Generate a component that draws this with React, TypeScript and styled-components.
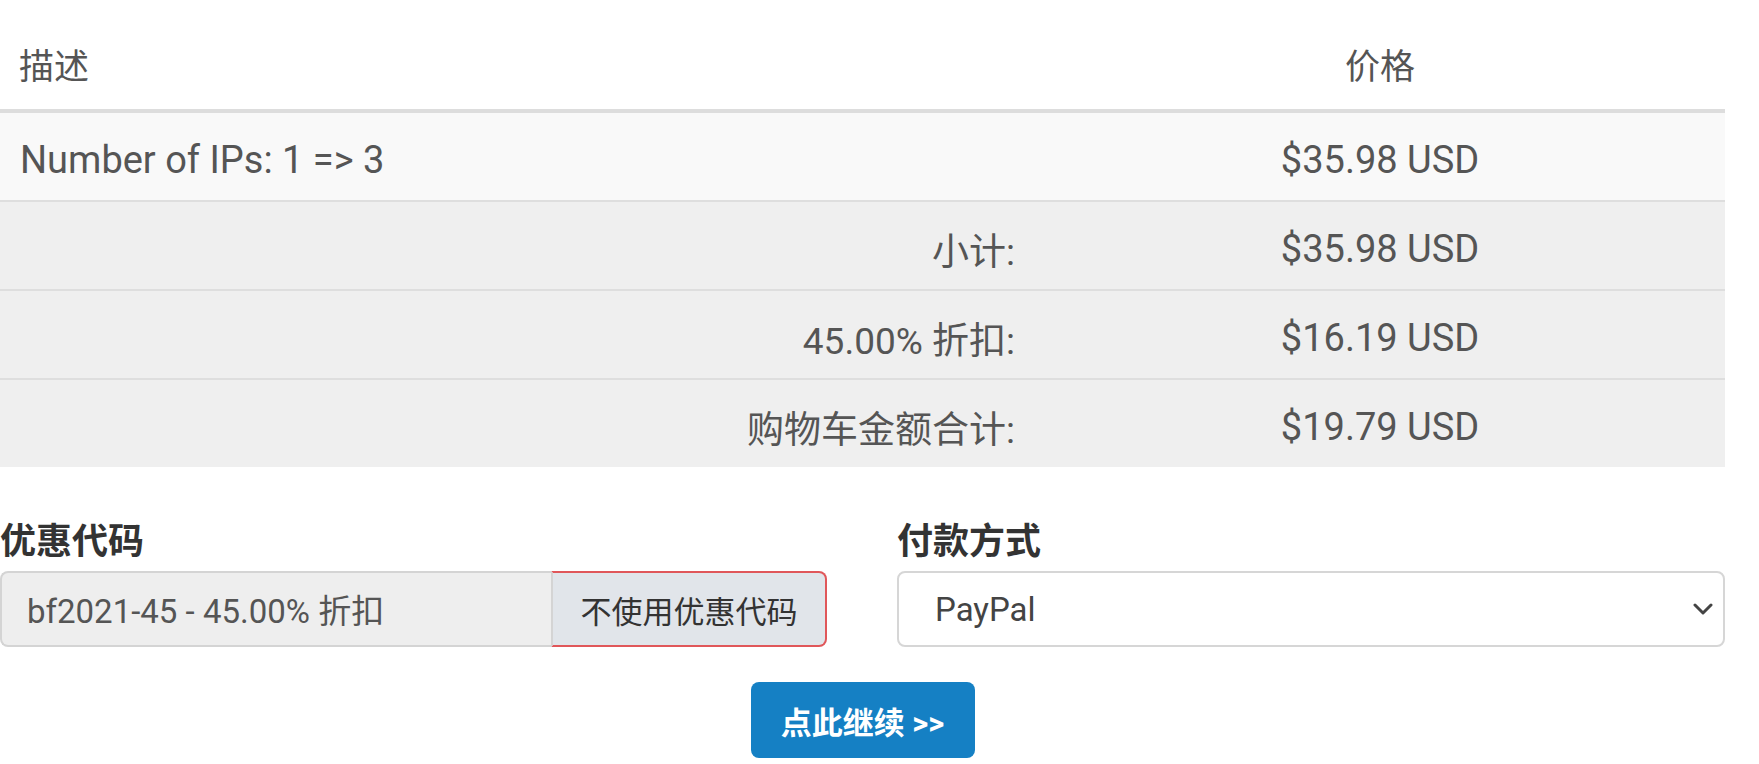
import React from "react";
import styled, { createGlobalStyle } from "styled-components";

const Global = createGlobalStyle`
  html, body { margin: 0; padding: 0; background: #fff; }
  body { font-family: Roboto, "Noto Sans CJK SC", sans-serif; color: #555; }
`;

const Page = styled.div`
  width: 1725px;
  padding-top: 22px;
`;

const Table = styled.table`
  width: 100%;
  border-collapse: collapse;
  font-size: 38px;
`;

const Th = styled.th<{ $align?: string }>`
  height: 83px;
  padding: 0 19px 4px;
  text-align: ${(p) => p.$align || "left"};
  font-size: 35px;
  font-weight: 400;
  color: #555;
  border-bottom: 4px solid #dddddd;
  vertical-align: middle;
`;

const Tr = styled.tr<{ $bg: string }>`
  background: ${(p) => p.$bg};
`;

const Td = styled.td<{ $align?: string; $first?: boolean; $w?: string; $size?: number }>`
  height: 81px;
  padding: 6px 20px 0;
  text-align: ${(p) => p.$align || "left"};
  vertical-align: middle;
  font-size: ${(p) => (p.$size ? `${p.$size}px` : "inherit")};
  border-top: ${(p) => (p.$first ? "none" : "2px solid #dedede")};
  width: ${(p) => p.$w || "auto"};
`;

const Form = styled.div`
  display: grid;
  grid-template-columns: 827px 828px;
  column-gap: 70px;
  margin-top: 54px;
`;

const Label = styled.div`
  font-size: 36px;
  line-height: 42px;
  font-weight: 600;
  color: #333;
  margin-bottom: 8px;
`;

const Group = styled.div`
  display: flex;
  height: 76px;
`;

const CouponInput = styled.div`
  flex: 1;
  box-sizing: border-box;
  background: #eeeeee;
  border: 2px solid #d4d4d4;
  border-right: none;
  border-radius: 8px 0 0 8px;
  padding: 0 25px;
  display: flex;
  align-items: center;
  font-size: 33px;
  color: #555;
`;

const RemoveButton = styled.button`
  width: 276px;
  box-sizing: border-box;
  background: #e1e5ea;
  border: 2px solid #e0575a;
  border-left: 2px solid #d4d4d4;
  border-radius: 0 8px 8px 0;
  font-family: inherit;
  font-size: 31px;
  color: #333;
  padding: 0;
  cursor: pointer;
`;

const Select = styled.div`
  height: 76px;
  box-sizing: border-box;
  border: 2px solid #d6d6d6;
  border-radius: 8px;
  background: #fff;
  display: flex;
  align-items: center;
  justify-content: space-between;
  padding: 0 10px 0 36px;
  font-size: 33px;
  color: #444;
`;

const Chevron = styled.svg`
  width: 20px;
  height: 12px;
`;

const Actions = styled.div`
  display: flex;
  justify-content: center;
  margin-top: 35px;
`;

const ContinueButton = styled.button`
  width: 224px;
  height: 76px;
  border: none;
  border-radius: 8px;
  background: #1580c4;
  color: #fff;
  font-family: inherit;
  font-size: 31px;
  font-weight: 700;
  cursor: pointer;
`;

export default function App() {
  return (
    <Page>
      <Global />
      <Table>
        <thead>
          <tr>
            <Th>描述</Th>
            <Th $align="center">价格</Th>
          </tr>
        </thead>
        <tbody>
          <Tr $bg="#f9f9f9">
            <Td $first $w="60%">Number of IPs: 1 =&gt; 3</Td>
            <Td $first $align="center">$35.98 USD</Td>
          </Tr>
          <Tr $bg="#efefef">
            <Td $align="right" $size={37}>小计:</Td>
            <Td $align="center">$35.98 USD</Td>
          </Tr>
          <Tr $bg="#efefef">
            <Td $align="right" $size={37}>45.00% 折扣:</Td>
            <Td $align="center">$16.19 USD</Td>
          </Tr>
          <Tr $bg="#efefef">
            <Td $align="right" $size={37}>购物车金额合计:</Td>
            <Td $align="center">$19.79 USD</Td>
          </Tr>
        </tbody>
      </Table>
      <Form>
        <div>
          <Label>优惠代码</Label>
          <Group>
            <CouponInput>bf2021-45 - 45.00% 折扣</CouponInput>
            <RemoveButton>不使用优惠代码</RemoveButton>
          </Group>
        </div>
        <div>
          <Label>付款方式</Label>
          <Select>
            <span>PayPal</span>
            <Chevron viewBox="0 0 20 12">
              <path d="M2 2 L10 10 L18 2" fill="none" stroke="#444" strokeWidth="3" strokeLinecap="round" strokeLinejoin="round" />
            </Chevron>
          </Select>
        </div>
      </Form>
      <Actions>
        <ContinueButton>点此继续 &gt;&gt;</ContinueButton>
      </Actions>
    </Page>
  );
}
